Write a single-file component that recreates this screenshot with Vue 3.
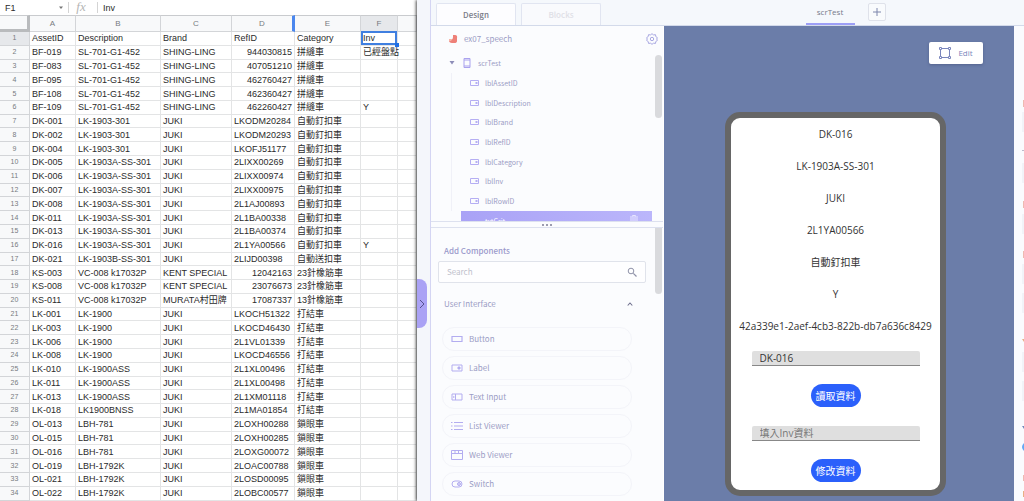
<script setup>
import { ref } from 'vue'

const columns = ['A', 'B', 'C', 'D', 'E', 'F', '']

const jukiRows = (list) => list.map(([id, desc, refId, cat, inv = '']) => [id, desc, 'JUKI', refId, cat, inv])

const rows = [
  ['AssetID', 'Description', 'Brand', 'RefID', 'Category', 'Inv'],
  ['BF-019', 'SL-701-G1-452', 'SHING-LING', '944030815', '拼縫車', '已經盤點'],
  ['BF-083', 'SL-701-G1-452', 'SHING-LING', '407051210', '拼縫車', ''],
  ['BF-095', 'SL-701-G1-452', 'SHING-LING', '462760427', '拼縫車', ''],
  ['BF-108', 'SL-701-G1-452', 'SHING-LING', '462360427', '拼縫車', ''],
  ['BF-109', 'SL-701-G1-452', 'SHING-LING', '462260427', '拼縫車', 'Y'],
  ...jukiRows([
    ['DK-001', 'LK-1903-301', 'LKODM20284', '自動釘扣車'],
    ['DK-002', 'LK-1903-301', 'LKODM20293', '自動釘扣車'],
    ['DK-004', 'LK-1903-301', 'LKOFJ51177', '自動釘扣車'],
    ['DK-005', 'LK-1903A-SS-301', '2LIXX00269', '自動釘扣車'],
    ['DK-006', 'LK-1903A-SS-301', '2LIXX00974', '自動釘扣車'],
    ['DK-007', 'LK-1903A-SS-301', '2LIXX00975', '自動釘扣車'],
    ['DK-008', 'LK-1903A-SS-301', '2L1AJ00893', '自動釘扣車'],
    ['DK-011', 'LK-1903A-SS-301', '2L1BA00338', '自動釘扣車'],
    ['DK-013', 'LK-1903A-SS-301', '2L1BA00374', '自動釘扣車'],
    ['DK-016', 'LK-1903A-SS-301', '2L1YA00566', '自動釘扣車', 'Y'],
    ['DK-021', 'LK-1903B-SS-301', '2LIJD00398', '自動送扣車'],
  ]),
  ['KS-003', 'VC-008 k17032P', 'KENT SPECIAL', '12042163', '23針橡筋車', ''],
  ['KS-008', 'VC-008 k17032P', 'KENT SPECIAL', '23076673', '23針橡筋車', ''],
  ['KS-011', 'VC-008 k17032P', 'MURATA村田牌', '17087337', '13針橡筋車', ''],
  ...jukiRows([
    ['LK-001', 'LK-1900', 'LKOCH51322', '打結車'],
    ['LK-003', 'LK-1900', 'LKOCD46430', '打結車'],
    ['LK-006', 'LK-1900', '2L1VL01339', '打結車'],
    ['LK-008', 'LK-1900', 'LKOCD46556', '打結車'],
    ['LK-010', 'LK-1900ASS', '2L1XL00496', '打結車'],
    ['LK-011', 'LK-1900ASS', '2L1XL00498', '打結車'],
    ['LK-013', 'LK-1900ASS', '2L1XM01118', '打結車'],
    ['LK-018', 'LK1900BNSS', '2L1MA01854', '打結車'],
    ['OL-013', 'LBH-781', '2LOXH00288', '鎖眼車'],
    ['OL-015', 'LBH-781', '2LOXH00285', '鎖眼車'],
    ['OL-016', 'LBH-781', '2LOXG00072', '鎖眼車'],
    ['OL-019', 'LBH-1792K', '2LOAC00788', '鎖眼車'],
    ['OL-021', 'LBH-1792K', '2LOSD00095', '鎖眼車'],
    ['OL-022', 'LBH-1792K', '2LOBC00577', '鎖眼車'],
  ]),
]

const isNumber = (value) => /^\d+$/.test(value)

const labels = ['lblAssetID', 'lblDescription', 'lblBrand', 'lblRefID', 'lblCategory', 'lblInv', 'lblRowID']
const components = ['Button', 'Label', 'Text Input', 'List Viewer', 'Web Viewer', 'Switch']
const record = ['DK-016', 'LK-1903A-SS-301', 'JUKI', '2L1YA00566', '自動釘扣車', 'Y', '42a339e1-2aef-4cb3-822b-db7a636c8429']

const cellName = ref('F1')
const formula = ref('Inv')
const search = ref('')
const criteria = ref('DK-016')
const inv = ref('')
</script>

<template>
  <main class="desk">
    <section class="sheet">
      <div class="formula-bar">
        <input v-model="cellName" class="name-box" aria-label="Cell" />
        <svg class="name-caret" viewBox="0 0 6 4"><path d="M1 0.5h4L3 3z" fill="#777" /></svg>
        <span class="fx">fx</span>
        <input v-model="formula" class="formula" aria-label="Formula" />
      </div>
      <table>
        <colgroup>
          <col class="c-head" /><col class="c-a" /><col class="c-b" /><col class="c-c" />
          <col class="c-d" /><col class="c-e" /><col class="c-f" /><col />
        </colgroup>
        <thead>
          <tr>
            <th class="corner"></th>
            <th v-for="c in columns" :key="c" scope="col" :class="{ active: c === 'F', frozen: c === 'D' }">{{ c }}</th>
          </tr>
        </thead>
        <tbody>
          <tr v-for="(row, r) in rows" :key="r">
            <th scope="row" :class="{ active: r === 0 }">{{ r + 1 }}</th>
            <td v-for="(cell, c) in row" :key="c" :class="{ num: isNumber(cell), selected: r === 0 && c === 5 }">{{ cell }}</td>
            <td></td>
          </tr>
        </tbody>
      </table>
    </section>

    <section class="studio">
      <div class="rail">
        <button class="expand" aria-label="Expand panel">
          <svg viewBox="0 0 6 10"><path d="M1 1l4 4-4 4" fill="none" stroke="#55508f" stroke-width="1" /></svg>
        </button>
      </div>

      <header class="topbar">
        <nav class="modes">
          <button class="mode on">Design</button>
          <button class="mode">Blocks</button>
        </nav>
        <nav class="screens">
          <button class="screen">scrTest</button>
          <button class="add" aria-label="Add screen">
            <svg viewBox="0 0 10 10"><path d="M5 1v8M1 5h8" stroke="#7c86ac" stroke-width="1" /></svg>
          </button>
        </nav>
      </header>

      <aside class="panel">
        <div class="tree">
          <div class="project">
            <svg class="logo" viewBox="0 0 10 10">
              <path d="M5 1h2c2 0 2.500 1.500 2 3v3c0 1.500-1 2-2.500 2H4C2 9 1 8 1 6.500 3 7 5 5.500 5 3z" fill="#ee8078" />
              <path d="M1 5h3c0 1.500-1 2-3 2z" fill="#f7b5a6" />
            </svg>
            <span class="project-name">ex07_speech</span>
            <button class="gear" aria-label="Settings">
              <svg viewBox="0 0 12 12" fill="none" stroke="#a9a8e2">
                <path d="M6 .7l1.500 1.200 2-.2.3 1.900 1.600 1.100L10.700 6l.7 1.400-1.600 1.100-.3 1.900-2-.2L6 11.300 4.500 10.200l-2 .2-.3-1.900L.6 7.400 1.300 6 .6 4.700l1.600-1.100.3-1.900 2 .2z" />
                <circle cx="6" cy="6" r="1.700" />
              </svg>
            </button>
          </div>
          <div class="root">
            <svg class="caret" viewBox="0 0 6 4"><path d="M.5 0h5L3 3.500z" fill="#8d8db8" /></svg>
            <svg class="device" viewBox="0 0 8 10"><path d="M1 .5h6v9H1zM1 2h6M1 8h6" fill="none" stroke="#aaa2ee" /></svg>
            <span>scrTest</span>
          </div>
          <ul class="nodes">
            <li v-for="name in labels" :key="name">
              <svg viewBox="0 0 10 8"><path d="M.5 1.500h8v5h-8z" fill="none" stroke="#b5aef3" /><path d="M5.500 3h2v2h-2z" fill="#b5aef3" /></svg>
              <span>{{ name }}</span>
            </li>
          </ul>
          <div class="node-selected">
            <span>txtCrit</span>
            <svg viewBox="0 0 8 8"><path d="M0 2h8M2.500 1.500V.5h3v1M1 3v5h6V3M3 3v4M5 3v4" fill="none" stroke="#e7e4ff" /></svg>
          </div>
          <i class="thumb tree-thumb"></i>
        </div>

        <div class="splitter"><i></i><i></i><i></i></div>

        <div class="palette">
          <h2>Add Components</h2>
          <label class="search">
            <input v-model="search" type="text" placeholder="Search" aria-label="Search" />
            <svg viewBox="0 0 10 10"><path d="M6.300 6.300L9.500 9.500" stroke="#8f92a8" stroke-width="1.200" /><circle cx="4" cy="4" r="2.800" fill="none" stroke="#8f92a8" /></svg>
          </label>
          <button class="group">
            <span>User Interface</span>
            <svg viewBox="0 0 6 4"><path d="M.7 3.500L3 1l2.300 2.500" fill="none" stroke="#6f708e" stroke-width="1.100" /></svg>
          </button>
          <ul class="items">
            <li v-for="name in components" :key="name">
              <button>
                <svg viewBox="0 0 12 10" fill="none" stroke="#b3adf0">
                  <path v-if="name === 'Button'" d="M1 2.500h10v5H1z" stroke-width="1.200" />
                  <template v-else-if="name === 'Label'">
                    <path d="M1 2h10v6H1z" /><path d="M7 4h2v2H7z" fill="#b3adf0" />
                  </template>
                  <path v-else-if="name === 'Text Input'" d="M1 2h10v6H1zM4.500 2v6M2.800 4v2" />
                  <path v-else-if="name === 'List Viewer'" d="M0 1.500h1.500M3 1.500h9M0 5h1.500M3 5h9M0 8.500h1.500M3 8.500h9" />
                  <path v-else-if="name === 'Web Viewer'" d="M.5.500h11v9H.5zM.5 3.500h11M4 .5v3M7.500 .5v3" />
                  <template v-else>
                    <rect x="1" y="2" width="10" height="6" rx="3" /><circle cx="8" cy="5" r="1.500" fill="#d5d1f8" />
                  </template>
                </svg>
                <span>{{ name }}</span>
              </button>
            </li>
          </ul>
          <i class="thumb palette-thumb"></i>
        </div>
      </aside>

      <div class="canvas">
        <button class="edit">
          <svg viewBox="0 0 12 12" fill="none" stroke="#7a86bd">
            <path d="M3 1.500h6M3 10.500h6M1.500 3v6M10.500 3v6" />
            <path d="M.5.500h2v2h-2zM9.500.5h2v2h-2zM.5 9.500h2v2h-2zM9.500 9.500h2v2h-2z" />
          </svg>
          <span>Edit</span>
        </button>
        <div class="phone">
          <p v-for="line in record" :key="line">{{ line }}</p>
          <input v-model="criteria" type="text" aria-label="AssetID" />
          <button>讀取資料</button>
          <input v-model="inv" type="text" placeholder="填入Inv資料" aria-label="Inv" />
          <button>修改資料</button>
        </div>
      </div>

      <aside class="inspector">
        <svg viewBox="0 0 10 476" preserveAspectRatio="xMaxYMin meet">
          <path d="M8 86h2v20H8zM8 137h2v20H8zM8 188h2v20H8zM8 238h2v20H8zM8 267h2v20H8zM8 326h2v20H8zM8 355h2v20H8z" fill="#f1f3f8" />
          <path d="M8 124h2v1H8z" fill="#bbc" />
          <path d="M9 74h1v7H9zM9 175h1v7H9zM9 225h1v7H9zM9 449h1v6H9z" fill="#eeb9b1" />
          <path d="M8 313h2v3zM9 465h1v6H9z" fill="#e9ae84" />
          <path d="M8 400h2v3z" fill="#7089bd" />
          <path d="M10 417q-4 4 0 8z" fill="#62a8f5" />
        </svg>
      </aside>
    </section>
  </main>
</template>

<style>
body {
  margin: 0;
  background: #fff;
}
</style>

<style scoped>
* {
  box-sizing: border-box;
}
button,
input {
  margin: 0;
  padding: 0;
  border: 0;
  background: none;
  font: inherit;
  color: inherit;
  outline: none;
  min-width: 0;
}
svg {
  display: block;
  flex: none;
}
ul {
  list-style: none;
  margin: 0;
  padding: 0;
}
.desk {
  display: grid;
  grid-template-columns: 417fr 607fr;
  height: 100vh;
  overflow: hidden;
}

/* spreadsheet */
.sheet {
  display: flex;
  flex-direction: column;
  min-width: 0;
  overflow: hidden;
  background: #fff;
  color: #2b2b2b;
  font: 9px/12px "Liberation Sans", "Noto Sans CJK TC", sans-serif;
}
.formula-bar {
  display: flex;
  align-items: center;
  flex: none;
  height: 15px;
  padding-left: 5px;
}
.name-box {
  width: 53px;
}
.name-caret {
  width: 6px;
  height: 4px;
}
.fx {
  margin-left: 4px;
  width: 30px;
  height: 11px;
  border: solid #d4d4d4;
  border-width: 0 1px;
  text-align: center;
  padding-right: 4px;
  font: italic 13px/10px "Liberation Serif", serif;
  color: #b5b5b5;
}
.formula {
  flex: 1;
  margin-left: 5px;
}
table {
  width: 100%;
  height: calc(100vh - 15px);
  table-layout: fixed;
  border-spacing: 0;
}
.c-head { width: 30px; }
.c-a { width: 46px; }
.c-b { width: 85px; }
.c-c { width: 71px; }
.c-d { width: 63px; }
.c-e { width: 66px; }
.c-f { width: 37px; }
th,
td {
  padding: 0;
  white-space: nowrap;
  line-height: 12px;
  border: solid #e3e4e5;
  border-width: 0 1px 1px 0;
}
td {
  padding: 0 2px;
}
th {
  font-weight: 400;
  font-size: 7px;
  color: #777b80;
  background: #f8f9fa;
  border-color: #d3d5d8;
}
thead th {
  height: 17px;
  border-top: 1px solid #c9cbce;
  font-size: 8px;
}
thead .corner {
  border-right: 3px solid #b9bbbd;
  border-bottom: 3px solid #b9bbbd;
}
th.active {
  background: #e6e8eb;
}
th.frozen {
  border-right: 3px solid #4b87ee;
}
.num {
  text-align: right;
}
.selected {
  position: relative;
}
.selected::before {
  content: "";
  position: absolute;
  inset: -1px 0 0 0;
  border: 2px solid #3f7fe0;
}
.selected::after {
  content: "";
  position: absolute;
  right: -2px;
  bottom: -2px;
  width: 4px;
  height: 4px;
  background: #1f6fe5;
}

/* app builder */
.studio {
  position: relative;
  display: grid;
  grid-template-columns: 14px 233px minmax(0, 1fr) 10px;
  grid-template-rows: 26px minmax(0, 1fr);
  min-width: 0;
  overflow: hidden;
  background: #f5f8fc;
  box-shadow: -1px 0 3px rgba(0, 0, 0, 0.7);
  color: #9c9cc5;
  font: 8px/12px "Noto Sans CJK TC", sans-serif;
}
.rail {
  grid-row: 1 / 3;
  display: flex;
  flex-direction: column;
  padding-top: 279px;
  background: #f4f6fb;
  border-right: 1px solid #d4d5f3;
}
.expand {
  display: flex;
  align-items: center;
  justify-content: center;
  width: 10px;
  height: 49px;
  border-radius: 0 8px 8px 0;
  background: #aaa2f5;
}
.expand svg {
  width: 6px;
  height: 10px;
}
.topbar {
  grid-column: 2 / 5;
  display: grid;
  grid-template-columns: 233px 1fr;
  border-bottom: 1px solid #d3daea;
}
.modes {
  display: flex;
  gap: 5px;
  padding: 3px 0 0 5px;
}
.mode {
  width: 80px;
  border: 1px solid #e1e5f1;
  border-bottom: 0;
  border-radius: 2px 2px 0 0;
  background: #f9fafd;
  color: #dfe0e7;
  font-weight: 500;
}
.mode.on {
  background: #fdfdff;
  color: #777985;
}
.screens {
  display: flex;
  align-items: flex-start;
  justify-content: center;
  gap: 13px;
  margin-left: 3px;
}
.screen {
  width: 49px;
  height: 25px;
  border-bottom: 2px solid #9d9ff6;
  color: #767a8a;
  font: 8px/24px "Open Sans", sans-serif;
}
.add {
  display: grid;
  place-items: center;
  width: 18px;
  height: 18px;
  margin-top: 3px;
  border: 1px solid #dfe2ea;
  border-radius: 2px;
  background: #f9fbfd;
}
.add svg {
  width: 10px;
  height: 10px;
}
.panel {
  display: flex;
  flex-direction: column;
  min-height: 0;
  background: #fbfcfe;
  border-right: 1px solid #fff;
}
.tree {
  position: relative;
  flex: none;
  height: 195px;
  overflow: hidden;
}
.project {
  display: flex;
  align-items: center;
  height: 26px;
  padding: 0 5px 0 17px;
}
.logo {
  width: 10px;
  height: 10px;
}
.project-name {
  flex: 1;
  margin-left: 6px;
}
.gear svg {
  width: 12px;
  height: 12px;
}
.root {
  display: flex;
  align-items: center;
  height: 21px;
  padding-left: 18px;
  font-size: 7px;
}
.caret {
  width: 6px;
  height: 4px;
}
.device {
  width: 8px;
  height: 10px;
  margin: 0 7px 0 8px;
}
.nodes {
  display: grid;
  grid-auto-rows: 1fr;
  height: 138px;
  margin-left: 20px;
  border-left: 1px solid #f0f1f8;
  font-size: 7px;
}
.nodes li {
  display: flex;
  align-items: center;
  gap: 5px;
  padding-left: 18px;
}
.nodes svg {
  width: 10px;
  height: 8px;
}
.node-selected {
  display: flex;
  justify-content: space-between;
  align-items: flex-start;
  height: 20px;
  margin: 0 11px 0 30px;
  padding: 4px 14px 0 24px;
  background: linear-gradient(90deg, #a9a2f6, #bbb6fb);
  color: #fff;
  font-size: 7px;
}
.node-selected svg {
  width: 8px;
  height: 8px;
}
.thumb {
  position: absolute;
  right: 1px;
  width: 7px;
  border-radius: 4px;
  background: #d9dadd;
}
.tree-thumb {
  top: 29px;
  height: 63px;
}
.splitter {
  display: flex;
  align-items: center;
  justify-content: center;
  gap: 2px;
  flex: none;
  height: 7px;
  border: solid #dde1ef;
  border-width: 1px 0;
}
.splitter i {
  width: 2px;
  height: 2px;
  border-radius: 1px;
  background: #7c7d94;
}
.palette {
  position: relative;
  flex: 1;
  min-height: 0;
  overflow: hidden;
  padding: 17px 17px 0 7px;
}
.palette-thumb {
  top: 0;
  height: 66px;
  border-radius: 0 0 4px 4px;
}
h2 {
  margin: 0 0 4px 6px;
  font-size: 8px;
  line-height: 12px;
  font-weight: 500;
  color: #9a99cb;
}
.search {
  display: flex;
  align-items: center;
  height: 22px;
  padding: 0 8px;
  border: 1px solid #e0e3eb;
  border-radius: 2px;
  background: #fefeff;
}
.search input {
  flex: 1;
}
.search input::placeholder {
  color: #c0c1cc;
  opacity: 1;
}
.search svg {
  width: 10px;
  height: 10px;
}
.group {
  display: flex;
  justify-content: space-between;
  align-items: center;
  width: 100%;
  margin-top: 15px;
  padding: 0 13px 0 6px;
}
.group svg {
  width: 6px;
  height: 4px;
}
.items {
  display: grid;
  gap: 5px;
  margin: 17px 14px 0 4px;
}
.items button {
  display: flex;
  align-items: center;
  gap: 6px;
  width: 100%;
  height: 24px;
  padding-left: 8px;
  border: 1px solid #f3f4f9;
  border-radius: 12px;
}
.items li {
  display: flex;
}
.items svg {
  width: 12px;
  height: 10px;
}
.canvas {
  display: flex;
  flex-direction: column;
  min-height: 0;
  background: #6b7da9;
  font-family: "Open Sans", "Noto Sans CJK TC", sans-serif;
}
.edit {
  align-self: flex-end;
  display: flex;
  align-items: center;
  justify-content: center;
  gap: 7px;
  flex: none;
  width: 54px;
  height: 22px;
  margin: 16px 31px 0 0;
  border-radius: 2px;
  background: #fff;
  box-shadow: 0 1px 3px rgba(40, 50, 90, 0.35);
  color: #7a86bd;
}
.edit svg {
  width: 12px;
  height: 12px;
}
.phone {
  align-self: center;
  display: flex;
  flex-direction: column;
  align-items: center;
  flex: none;
  width: 221px;
  margin: 48px 7px 0 0;
  padding-bottom: 8px;
  border: 6px solid #666;
  border-radius: 15px;
  background: #fff;
  color: #333;
  font-size: 10px;
}
.phone p {
  margin: 0;
  line-height: 32px;
}
.phone input {
  width: 168px;
  height: 15px;
  margin-top: 9px;
  padding: 0 8px;
  border-bottom: 1px solid #888;
  border-radius: 2px 2px 0 0;
  background: #dfdfdf;
}
.phone button + input {
  margin-top: 19px;
}
.phone input::placeholder {
  color: #777;
  opacity: 1;
}
.phone button {
  width: 50px;
  height: 23px;
  margin-top: 18px;
  border-radius: 12px;
  background: #2b60fb;
  color: #fff;
}
.inspector {
  overflow: hidden;
  background: #fafbfe;
}
.inspector svg {
  width: 100%;
}
</style>
